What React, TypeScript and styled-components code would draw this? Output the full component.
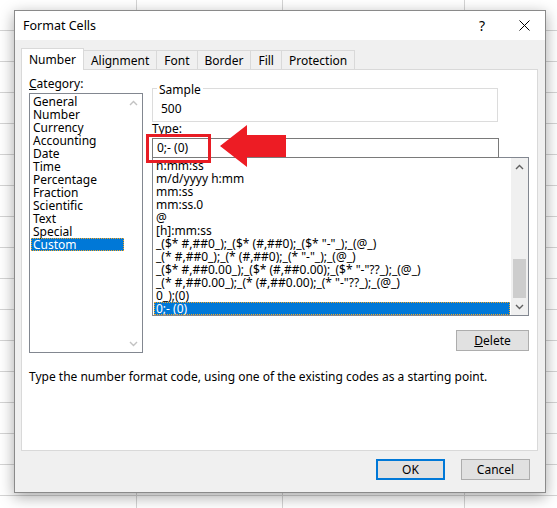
import React from 'react';
import styled, { createGlobalStyle } from 'styled-components';

const Global = createGlobalStyle`
  html, body { margin: 0; padding: 0; }
  body {
    width: 557px;
    height: 508px;
    overflow: hidden;
    font-family: "Noto Sans", "Open Sans", sans-serif;
    font-size: 12px;
    color: #000;
    background-color: #fff;
    background-image:
      linear-gradient(90deg, transparent 136px, #d4d4d4 136px, #d4d4d4 137px, transparent 137px),
      linear-gradient(90deg, transparent 282px, #d4d4d4 282px, #d4d4d4 283px, transparent 283px),
      linear-gradient(90deg, transparent 464px, #d4d4d4 464px, #d4d4d4 465px, transparent 465px),
      repeating-linear-gradient(180deg, transparent 0, transparent 30px, #d4d4d4 30px, #d4d4d4 31px);
  }
`;

const categories = [
  'General', 'Number', 'Currency', 'Accounting', 'Date', 'Time', 'Percentage',
  'Fraction', 'Scientific', 'Text', 'Special', 'Custom',
];

const types = [
  'h:mm:ss',
  'm/d/yyyy h:mm',
  'mm:ss',
  'mm:ss.0',
  '@',
  '[h]:mm:ss',
  '_($* #,##0_);_($* (#,##0);_($* "-"_);_(@_)',
  '_(* #,##0_);_(* (#,##0);_(* "-"_);_(@_)',
  '_($* #,##0.00_);_($* (#,##0.00);_($* "-"??_);_(@_)',
  '_(* #,##0.00_);_(* (#,##0.00);_(* "-"??_);_(@_)',
  '0_);(0)',
  '0;- (0)',
];

const tabs = ['Number', 'Alignment', 'Font', 'Border', 'Fill', 'Protection'];

const Page = styled.div`
  padding: 10px 0 0 14px;
`;

const Dialog = styled.div`
  width: 530px;
  height: 481px;
  background: #f0f0f0;
  border: 1px solid #8a8a8a;
  box-shadow: 0 4px 14px rgba(0, 0, 0, 0.35);
  display: flex;
  flex-direction: column;
  position: relative;
`;

const TitleBar = styled.div`
  height: 29px;
  background: #fff;
  display: flex;
  align-items: center;
  padding-left: 8px;
  font-size: 12.5px;
`;

const TitleText = styled.div`
  flex: 1;
`;

const TitleButton = styled.div`
  width: 42px;
  display: flex;
  justify-content: center;
  align-items: center;
  font-size: 14px;
`;

const Body = styled.div`
  padding: 8px 7px 0 6px;
  display: flex;
  flex-direction: column;
  flex: 1;
`;

const TabRow = styled.div`
  display: flex;
  align-items: flex-end;
  height: 21px;
  padding-left: 1px;
`;

const Tab = styled.div<{ $active?: boolean }>`
  height: ${(p) => (p.$active ? '22px' : '19px')};
  box-sizing: border-box;
  padding: 0 7px;
  display: flex;
  align-items: center;
  justify-content: center;
  border: 1px solid #d9d9d9;
  border-bottom: none;
  margin-left: -1px;
  background: ${(p) => (p.$active ? '#fff' : '#f0f0f0')};
  position: relative;
  z-index: ${(p) => (p.$active ? 2 : 1)};
  margin-bottom: ${(p) => (p.$active ? '-1px' : '0')};
`;

const Panel = styled.div`
  background: #fff;
  border: 1px solid #d9d9d9;
  height: 382px;
  box-sizing: border-box;
  padding: 7px 8px 0 7px;
  display: flex;
  flex-direction: column;
`;

const Columns = styled.div`
  display: flex;
  gap: 9px;
`;

const Left = styled.div`
  width: 114px;
  display: flex;
  flex-direction: column;
`;

const Right = styled.div`
  flex: 1;
  display: flex;
  flex-direction: column;
  padding-top: 11px;
`;

const Label = styled.div`
  height: 16px;
  line-height: 14px;
`;

const ListBox = styled.div<{ $h: number }>`
  height: ${(p) => p.$h}px;
  border: 1px solid #828790;
  box-sizing: border-box;
  display: flex;
  background: #fff;
`;

const Items = styled.div`
  flex: 1;
  padding: 1px 1px 0 1px;
  overflow: hidden;
`;

const Item = styled.div<{ $sel?: boolean }>`
  height: 13px;
  line-height: 13px;
  padding-left: 2px;
  white-space: nowrap;
  background: ${(p) => (p.$sel ? '#0078d7' : 'transparent')};
  color: ${(p) => (p.$sel ? '#fff' : '#000')};
  outline: ${(p) => (p.$sel ? '1px dotted #f5a623' : 'none')};
  outline-offset: -1px;
`;

const ScrollBar = styled.div<{ $bg: string }>`
  width: 17px;
  background: ${(p) => p.$bg};
  display: flex;
  flex-direction: column;
  align-items: center;
`;

const Arrow = styled.div`
  height: 17px;
  width: 17px;
  display: flex;
  align-items: center;
  justify-content: center;
`;

const Track = styled.div`
  flex: 1;
  width: 100%;
  display: flex;
  flex-direction: column;
  justify-content: flex-end;
  align-items: center;
`;

const Thumb = styled.div`
  width: 13px;
  height: 39px;
  background: #cdcdcd;
`;

const Fieldset = styled.div`
  border: 1px solid #dcdcdc;
  height: 34px;
  box-sizing: border-box;
  position: relative;
  padding: 11px 0 0 8px;
  margin-right: 31px;
`;

const Legend = styled.span`
  position: absolute;
  top: -8px;
  left: 4px;
  background: #fff;
  padding: 0 2px;
`;

const Input = styled.div`
  height: 20px;
  border: 1px solid #7a7a7a;
  box-sizing: border-box;
  padding-left: 4px;
  line-height: 18px;
  margin-right: 30px;
  position: relative;
`;

const Highlight = styled.div`
  position: absolute;
  left: -7px;
  top: -5px;
  width: 59px;
  height: 23px;
  border: 3px solid #e81c24;
`;

const ArrowSvg = styled.svg`
  position: absolute;
  left: 67px;
  top: -14px;
`;

const TypeList = styled(ListBox)`
  margin-top: -1px;
`;

const ButtonRow = styled.div<{ $pad: string }>`
  display: flex;
  justify-content: flex-end;
  gap: 16px;
  padding: ${(p) => p.$pad};
`;

const Button = styled.div<{ $w: number; $default?: boolean }>`
  width: ${(p) => p.$w}px;
  height: 21px;
  box-sizing: border-box;
  border: ${(p) => (p.$default ? '2px solid #0078d7' : '1px solid #adadad')};
  background: #e1e1e1;
  display: flex;
  align-items: center;
  justify-content: center;
`;

const Description = styled.div`
  padding: 15px 0 0 0;
`;

const Chevron = ({ up, color }: { up?: boolean; color: string }) => (
  <svg width="9" height="6" viewBox="0 0 9 6">
    <path d={up ? 'M1 5 L4.5 1.5 L8 5' : 'M1 1 L4.5 4.5 L8 1'} stroke={color} strokeWidth="1.4" fill="none" />
  </svg>
);

export default function App() {
  return (
    <>
      <Global />
      <Page>
        <Dialog>
          <TitleBar>
            <TitleText>Format Cells</TitleText>
            <TitleButton>?</TitleButton>
            <TitleButton>
              <svg width="11" height="11" viewBox="0 0 11 11">
                <path d="M0.5 0.5 L10.5 10.5 M10.5 0.5 L0.5 10.5" stroke="#000" strokeWidth="1" />
              </svg>
            </TitleButton>
          </TitleBar>
          <Body>
            <TabRow>
              {tabs.map((t, i) => (
                <Tab key={t} $active={i === 0}>{t}</Tab>
              ))}
            </TabRow>
            <Panel>
              <Columns>
                <Left>
                  <Label><u>C</u>ategory:</Label>
                  <ListBox $h={260}>
                    <Items>
                      {categories.map((c) => (
                        <Item key={c} $sel={c === 'Custom'}>{c}</Item>
                      ))}
                    </Items>
                    <ScrollBar $bg="#fff">
                      <Arrow><Chevron up color="#c2c2c2" /></Arrow>
                      <Track />
                      <Arrow><Chevron color="#c2c2c2" /></Arrow>
                    </ScrollBar>
                  </ListBox>
                </Left>
                <Right>
                  <Fieldset>
                    <Legend>Sample</Legend>
                    500
                  </Fieldset>
                  <Label>Type:</Label>
                  <Input>
                    0;- (0)
                    <Highlight />
                    <ArrowSvg width="66" height="42" viewBox="0 0 66 42">
                      <path d="M0 21 L27 0 L27 10 L66 10 L66 32 L27 32 L27 42 Z" fill="#ed1c24" />
                    </ArrowSvg>
                  </Input>
                  <TypeList $h={159}>
                    <Items>
                      {types.map((t, i) => (
                        <Item key={i} $sel={i === types.length - 1}>{t}</Item>
                      ))}
                    </Items>
                    <ScrollBar $bg="#f0f0f0">
                      <Arrow><Chevron up color="#606060" /></Arrow>
                      <Track><Thumb /></Track>
                      <Arrow><Chevron color="#606060" /></Arrow>
                    </ScrollBar>
                  </TypeList>
                  <ButtonRow $pad="14px 0 0 0">
                    <Button $w={73}><span><u>D</u>elete</span></Button>
                  </ButtonRow>
                </Right>
              </Columns>
              <Description>
                Type the number format code, using one of the existing codes as a starting point.
              </Description>
            </Panel>
            <ButtonRow $pad="8px 8px 0 0">
              <Button $w={69} $default>OK</Button>
              <Button $w={69}>Cancel</Button>
            </ButtonRow>
          </Body>
        </Dialog>
      </Page>
    </>
  );
}
